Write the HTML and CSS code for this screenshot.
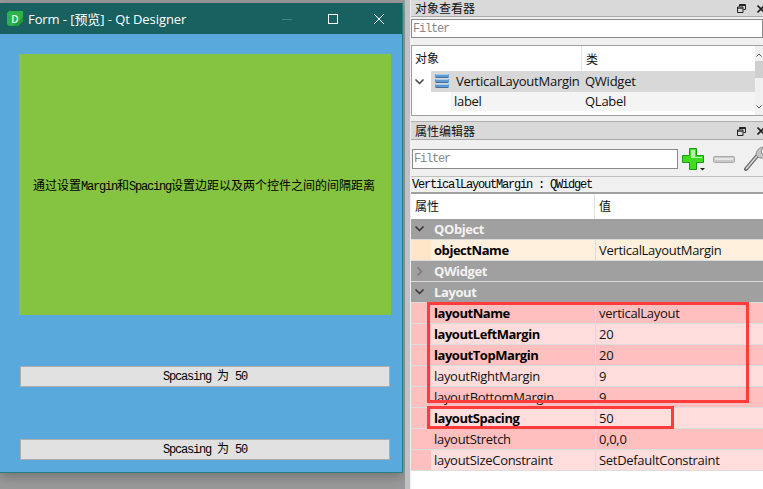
FILE: index.html
```html
<!DOCTYPE html>
<html lang="zh">
<head>
<meta charset="utf-8">
<title>Qt Designer</title>
<link rel="stylesheet" href="styles.css">
</head>
<body>
<div class="desktop">
  <section class="preview">
    <header class="titlebar">
      <svg class="appicon" width="16" height="15" viewBox="0 0 16 15"><path d="M0 2 2 0H16V10L11 15H2L0 13Z" fill="#2bb34a"/><path d="M16 6V10L11 15H6Z" fill="#1f9a3c"/></svg>
      <span class="appicon-letter">D</span>
      <span class="wintitle">Form - [预览] - Qt Designer</span>
      <span class="winbtns">
        <svg width="12" height="12" viewBox="0 0 12 12"><path d="M1 6.500H11" stroke="#4d8080" fill="none"/></svg>
        <svg width="12" height="12" viewBox="0 0 12 12"><rect x="1.500" y="1.500" width="9" height="9" stroke="#fff" fill="none"/></svg>
        <svg width="12" height="12" viewBox="0 0 12 12"><path d="M1 1 11 11M11 1 1 11" stroke="#fff" fill="none"/></svg>
      </span>
    </header>
    <div class="form">
      <div class="greenlabel"><span>通过设置<span class="lat">Margin</span>和<span class="lat">Spacing</span>设置边距以及两个控件之间的间隔距离</span></div>
      <button class="pbtn"><span class="lat">Spcasing </span>为<span class="lat"> 50</span></button>
      <button class="pbtn"><span class="lat">Spcasing </span>为<span class="lat"> 50</span></button>
    </div>
  </section>

  <aside class="side">
    <div class="dock-title"><span>对象查看器</span><span class="dock-btns"><svg width="9" height="9" viewBox="0 0 9 9"><path d="M2.500 2.500V.500H8.500V5.500H6.500M.500 3H6V8.500H.500Z M.5 4.200H6 M2.500 1.500H8.500" stroke="#222" fill="none"/></svg><svg width="8" height="8" viewBox="0 0 8 8"><path d="M.500 .500 7.500 7.500M7.500 .500 .500 7.500" stroke="#222" stroke-width="1.600" fill="none"/></svg></span></div>
    <div class="filter-wrap"><input class="filter" placeholder="Filter"></div>
    <div class="tree">
      <div class="tree-head"><span class="c1">对象</span><span class="c2">类</span></div>
      <div class="tree-row sel">
        <svg class="chev" width="9" height="6" viewBox="0 0 9 6"><path d="M.500 .500 4.500 4.500 8.500 .500" stroke="#444" stroke-width="1.500" fill="none"/></svg>
        <span class="tree-sel">
          <svg class="layicon" width="14" height="15" viewBox="0 0 14 15"><g fill="#5c9ad6"><rect y="0" width="14" height="4" rx="1"/><rect y="5" width="14" height="4" rx="1"/><rect y="10" width="14" height="4" rx="1"/></g><g stroke="#a6cbec"><path d="M1 .500H13M1 5.500H13M1 10.500H13"/></g><g stroke="#45709c"><path d="M1 3.500H13M1 8.500H13M1 13.500H13"/></g></svg>
          <span class="tname">VerticalLayoutMargin</span><span class="tclass">QWidget</span>
        </span>
      </div>
      <div class="tree-row sub"><span class="tname2">label</span><span class="tclass">QLabel</span></div>
      <div class="scroll">
        <svg width="6" height="4" viewBox="0 0 6 4"><path d="M.500 3.500 3 1 5.500 3.500" stroke="#555" fill="none"/></svg>
        <span class="thumb"></span>
        <svg width="6" height="4" viewBox="0 0 6 4"><path d="M.500 .500 3 3 5.500 .500" stroke="#555" fill="none"/></svg>
      </div>
    </div>

    <div class="dock-title second"><span>属性编辑器</span><span class="dock-btns"><svg width="9" height="9" viewBox="0 0 9 9"><path d="M2.500 2.500V.500H8.500V5.500H6.500M.500 3H6V8.500H.500Z M.5 4.200H6 M2.500 1.500H8.500" stroke="#222" fill="none"/></svg><svg width="8" height="8" viewBox="0 0 8 8"><path d="M.500 .500 7.500 7.500M7.500 .500 .500 7.500" stroke="#222" stroke-width="1.600" fill="none"/></svg></span></div>
    <div class="tools">
      <input class="filter f2" placeholder="Filter">
      <svg class="plus" width="24" height="23" viewBox="0 0 24 23"><path d="M7.500 .500H14.500V7.500H21.500V14.500H14.500V21.500H7.500V14.500H.500V7.500H7.500Z" fill="#3fdc1f" stroke="#159c12"/><path d="M9 2H13V9H20V10H9Z" fill="#b4f7a6"/><path d="M18 20H23L20.500 22.500Z" fill="#222"/></svg>
      <svg class="minus" width="22" height="7" viewBox="0 0 22 7"><rect x=".500" y=".500" width="21" height="6" rx="1" fill="#c8c8c8" stroke="#a8a8a8"/><rect x="2" y="2" width="18" height="2" fill="#e6e6e6"/></svg>
      <svg class="wrench" width="22" height="26" viewBox="0 0 22 26"><path d="M2 23 13 10" stroke="#6a6a6a" stroke-width="4" stroke-linecap="round"/><path d="M2 23 13 10" stroke="#d8d8d8" stroke-width="1.500"/><path d="M12 9C12 5 15 1 20 1L17 5 18 8 22 7V10C19 13 15 13 12 9Z" fill="#c4c4c4" stroke="#8a8a8a"/><rect x="19" y="21" width="2" height="1" fill="#222"/></svg>
    </div>
    <div class="objinfo">VerticalLayoutMargin : QWidget</div>
    <div class="ptable">
      <div class="phead"><span>属性</span><span>值</span></div>
      <div class="sect"><svg class="down" width="9" height="6" viewBox="0 0 9 6"><path d="M.500 .500 4.500 4.500 8.500 .500" stroke="#333" stroke-width="1.500" fill="none"/></svg><b>QObject</b></div>
      <div class="prow obj"><span class="n bold">objectName</span><span class="v">VerticalLayoutMargin</span></div>
      <div class="sect"><svg class="right" width="6" height="9" viewBox="0 0 6 9"><path d="M.500 .500 4.500 4.500 .500 8.500" stroke="#777" stroke-width="1.500" fill="none"/></svg><b>QWidget</b></div>
      <div class="sect"><svg class="down" width="9" height="6" viewBox="0 0 9 6"><path d="M.500 .500 4.500 4.500 8.500 .500" stroke="#333" stroke-width="1.500" fill="none"/></svg><b>Layout</b></div>
      <div class="prow d"><span class="n bold">layoutName</span><span class="v">verticalLayout</span></div>
      <div class="prow l"><span class="n bold">layoutLeftMargin</span><span class="v">20</span></div>
      <div class="prow d"><span class="n bold">layoutTopMargin</span><span class="v">20</span></div>
      <div class="prow l"><span class="n">layoutRightMargin</span><span class="v">9</span></div>
      <div class="prow d"><span class="n">layoutBottomMargin</span><span class="v">9</span></div>
      <div class="prow l"><span class="n bold">layoutSpacing</span><span class="v">50</span></div>
      <div class="prow d"><span class="n">layoutStretch</span><span class="v">0,0,0</span></div>
      <div class="prow l"><span class="n">layoutSizeConstraint</span><span class="v">SetDefaultConstraint</span></div>
    </div>
  </aside>
  <div class="mark m1"></div>
  <div class="mark m2"></div>
</div>
</body>
</html>
```
FILE: styles.css
```css
* { box-sizing: border-box; }
html, body { margin: 0; padding: 0; }
body { width: 763px; height: 489px; overflow: hidden; font-family: "Open Sans", "Noto Sans CJK SC", sans-serif; font-size: 13px; letter-spacing: -.3px; color: #111; }
.desktop { position: relative; width: 763px; height: 489px; background: #9a9a9a; overflow: hidden; }

.preview { position: absolute; left: -1px; top: 3px; width: 404px; height: 470px; display: flex; flex-direction: column; background: #5aa9dc; border: 1px solid #2a7c86; border-top: 0; box-shadow: 0 4px 12px rgba(0,0,0,.25); letter-spacing: 0; }
.titlebar { position: relative; height: 31px; flex: none; background: #196060; display: flex; align-items: center; padding-left: 7px; color: #fff; }
.appicon { flex: none; }
.appicon-letter { position: absolute; left: 7px; width: 16px; text-align: center; font-size: 10px; font-weight: 600; color: #e8ffe8; }
.wintitle { margin-left: 5px; font-size: 13px; letter-spacing: -.08px; }
.winbtns { margin-left: auto; margin-right: 17px; display: flex; gap: 34px; align-items: center; }
.form { flex: 1; display: flex; flex-direction: column; align-items: stretch; padding: 20px 11px 11px 19px; }
.greenlabel { height: 261px; flex: none; background: #85c440; display: flex; align-items: center; justify-content: center; white-space: nowrap; font-family: "Noto Sans CJK SC", sans-serif; font-size: 12px; color: #000; padding-right: 2px; }
.lat { font-family: "Liberation Mono", monospace; font-size: 12px; letter-spacing: -1.2px; white-space: pre; }
.pbtn { flex: none; height: 21px; margin: 51px 1px 0; padding: 0 0 2px; background: #e1e1e1; border: 1px solid #adadad; font-family: "Noto Sans CJK SC", sans-serif; font-size: 12px; line-height: 16px; color: #000; }
.pbtn + .pbtn { margin-top: 52px; }

.side { position: absolute; left: 405px; top: 0; width: 358px; height: 489px; background: #f0f0f0; border-left: 5px solid #c0c1c5; padding-left: 1px; overflow: hidden; }
.dock-title { height: 17px; background: #d9d9d9; border-bottom: 1px solid #a9a9a9; display: flex; justify-content: space-between; align-items: center; padding: 1px 0 0 4px; font-size: 12px; line-height: 15px; letter-spacing: 0; overflow: hidden; }
.dock-title.second { margin-top: 5px; height: 19px; border-top: 1px solid #b0b0b0; }
.dock-btns { display: flex; align-items: center; gap: 11px; margin-right: -2px; }
.filter-wrap { padding: 2px 0 0 0; }
.filter { display: block; width: 100%; height: 19px; border: 1px solid #8a8a8a; background: #fff; padding: 0 1px; font-family: "Liberation Mono", "Noto Sans CJK SC", monospace; font-size: 12px; letter-spacing: -1.2px; outline: 0; }
.filter::placeholder { color: #888; opacity: 1; }
.tree { position: relative; margin: 7px 0 0 0; height: 71px; background: #fff; border: 1px solid #a0a0a0; border-right: 0; }
.tree-head { height: 25px; display: flex; align-items: center; font-size: 12px; letter-spacing: 0; }
.tree-head .c1 { width: 170px; padding-left: 3px; border-right: 1px solid #e2e2e2; height: 25px; line-height: 25px; }
.tree-head .c2 { padding-left: 4px; }
.tree-row { display: flex; align-items: center; height: 21px; }
.chev { margin: 0 7px 0 3px; flex: none; }
.tree-sel { display: flex; align-items: center; background: #d8d8d8; height: 21px; width: 324px; padding-left: 4px; }
.layicon { flex: none; }
.tname { margin-left: 7px; width: 125px; white-space: nowrap; flex: none; line-height: 19px; letter-spacing: -.25px; }
.tclass { padding-left: 4px; line-height: 19px; letter-spacing: -.25px; }
.tree-row.sub { background: linear-gradient(90deg, #fff 39px, #f4f4f4 39px); height: 19px; width: 343px; }
.tname2 { margin-left: 42px; width: 127px; line-height: 19px; }
.scroll { position: absolute; right: 0; top: 0; bottom: 0; width: 8px; background: #f0f0f0; display: flex; flex-direction: column; align-items: center; padding: 7px 0 6px; }
.thumb { width: 8px; height: 17px; margin-top: 4px; background: #cfcfcf; }
.scroll svg:last-child { margin-top: auto; }

.tools { height: 36px; display: flex; align-items: center; padding: 0 0 0 1px; background: #f0f0f0; }
.f2 { width: 266px; flex: none; height: 20px; margin-top: 2px; }
.plus { margin-left: 4px; flex: none; margin-top: 2px; }
.minus { margin-left: 7px; flex: none; margin-top: 2px; }
.wrench { margin-left: 9px; flex: none; margin-top: 2px; }
.objinfo { height: 17px; border-top: 1px solid #c0c0c0; border-bottom: 1px solid #a0a0a0; padding: 1px 0 0 1px; font-family: "Liberation Mono", "Noto Sans CJK SC", monospace; font-size: 12px; letter-spacing: -1.2px; line-height: 15px; color: #000; background: #f0f0f0; white-space: pre; }
.ptable { background: #fff; height: 296px; border-top: 1px solid #a0a0a0; }
.phead { height: 25px; display: flex; font-size: 12px; line-height: 25px; letter-spacing: 0; }
.phead span:first-child { width: 184px; padding-left: 4px; border-right: 1px solid #e2e2e2; }
.phead span:last-child { padding-left: 4px; }
.sect { height: 21px; background: #a0a0a0; border-bottom: 1px solid #dadada; display: flex; align-items: center; color: #f2f2f2; font-size: 13px; }
.sect svg.down { margin: 0 10px 0 4px; flex: none; }
.sect svg.right { margin: 0 11px 0 6px; flex: none; }
.sect b { font-weight: 700; letter-spacing: -.4px; }
.prow { height: 21px; display: flex; align-items: center; border-bottom: 1px solid #dcdcdc; color: #111; }
.n { width: 164px; margin-left: 20px; padding-left: 3px; height: 20px; line-height: 20px; flex: none; white-space: nowrap; }
.v { height: 20px; line-height: 20px; padding-left: 3px; border-left: 1px solid #dcdcdc; flex: 1; }
.bold { font-weight: 700; color: #000; letter-spacing: -.45px; }
.prow.obj { background: #ffe6c8; }
.prow.obj .n, .prow.obj .v { background: #fff0de; }
.prow.d { background: #ffbfbf; }
.prow.l { background: #ffbfbf; }
.prow.l .n, .prow.l .v { background: #ffdddd; }

.mark { position: absolute; border: 3px solid #ff3b3b; pointer-events: none; }
.m1 { left: 427px; top: 302px; width: 322px; height: 101px; }
.m2 { left: 427px; top: 406px; width: 247px; height: 23px; }
```
